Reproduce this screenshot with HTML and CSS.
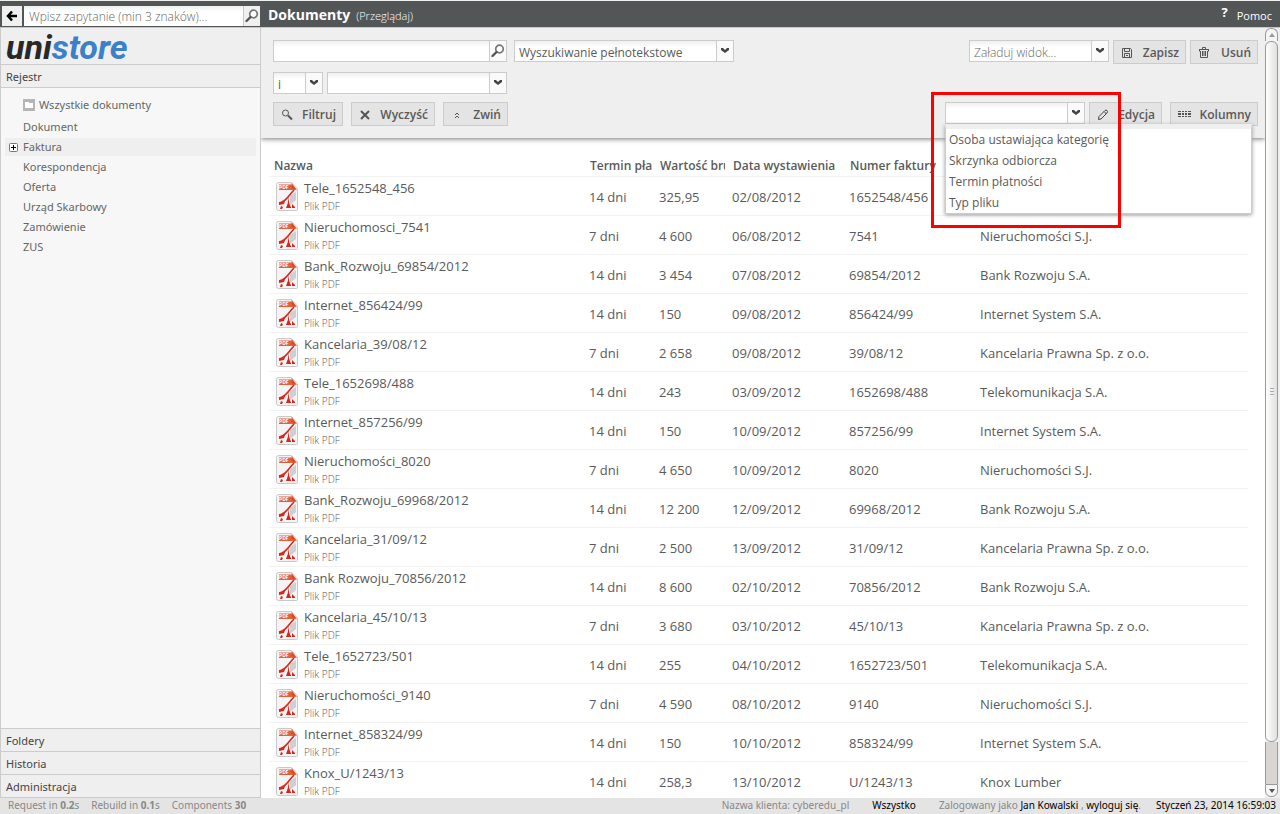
FILE: index.html
```html
<!DOCTYPE html>
<html lang="pl">
<head>
  <meta charset="UTF-8">
  <meta name="viewport" content="width=device-width, initial-scale=1">
  <title>unistore - Dokumenty</title>
  <link rel="stylesheet" href="styles.css">
</head>
<body>

<svg class="sprite" width="0" height="0">
  <symbol id="arrow" viewBox="0 0 10 6"><path d="M1 0h2l2 2 2-2h2v2L5 5 1 2z" fill="#444"/></symbol>
  <symbol id="lens" viewBox="0 0 14 14"><circle cx="8.5" cy="5" r="3.8" fill="#fff" stroke="#777" stroke-width="1.7"/><path d="M5.5 8L1.5 12" stroke="#555" stroke-width="2.4" stroke-linecap="round"/></symbol>
  <symbol id="pdf" viewBox="0 0 22 29">
    <path d="M2.5.5h13l6 6.500v20.500q0 1-1 1h-18q-2 0-2-2v-24q0-2 2-2z" fill="#f4f4f4" stroke="#c9c9c9"/>
    <path d="M14 14l6-4v8l-6 5z" fill="#cfcfd2"/>
    <path d="M3 2.500h12l5 5.500H3z" fill="#e2603a"/>
    <path d="M15.500 1l5.500 7-5.500-2z" fill="#d94a25"/>
    <path d="M3 21Q8 20 12 15T18 8" fill="none" stroke="#d8261c" stroke-width="1.600"/>
    <path d="M12.500 14q0 8 3 12h-5.500q2.500-5 2.500-12z" fill="#d8261c"/>
    <path d="M3 21l4-1 3-4-2 6-5 1zM5 24l2 1-1 2H4zM16 22l3 3v1h-3z" fill="#d8261c"/>
  </symbol>
</svg>

<header class="topbar">
  <form class="quick-search">
    <button type="button" class="back" aria-label="Wstecz">
      <svg width="12" height="12" viewBox="0 0 12 12"><path d="M6 1.500L2 6l4 4.500M2 6h9" fill="none" stroke="#000" stroke-width="2.500"/></svg>
    </button>
    <input type="text" aria-label="Szukaj" placeholder="Wpisz zapytanie (min 3 znaków)...">
    <button type="button" class="lens" aria-label="Szukaj"><svg width="14" height="14"><use href="#lens"/></svg></button>
  </form>
  <h1>Dokumenty</h1>
  <span class="mode">(Przeglądaj)</span>
  <a href="#" class="help"><b>?</b><span>Pomoc</span></a>
</header>

<div class="page">
  <aside class="sidebar">
    <div class="logo"><span>uni</span>store</div>
    <h2>Rejestr</h2>
    <ul class="tree">
      <li class="all">
        <svg width="12" height="12" viewBox="0 0 12 12"><path d="M0 0h12v12H0z" fill="#b5b5b5"/><path d="M2 3h4v1h4v5H2z" fill="#fff"/></svg>
        <a href="#">Wszystkie dokumenty</a>
      </li>
      <li><a href="#">Dokument</a></li>
      <li class="hover">
        <svg width="9" height="9" viewBox="0 0 9 9"><rect x=".5" y=".5" width="8" height="8" rx="1" fill="#fff" stroke="#777"/><path d="M2 4.500h5M4.500 2v5" stroke="#000"/></svg>
        <a href="#">Faktura</a>
      </li>
      <li><a href="#">Korespondencja</a></li>
      <li><a href="#">Oferta</a></li>
      <li><a href="#">Urząd Skarbowy</a></li>
      <li><a href="#">Zamówienie</a></li>
      <li><a href="#">ZUS</a></li>
    </ul>
    <h2>Foldery</h2>
    <h2>Historia</h2>
    <h2>Administracja</h2>
  </aside>

  <main class="content">
    <form class="toolbar">
      <div class="row">
        <div class="combo search">
          <input type="text" aria-label="Zapytanie">
          <button type="button" aria-label="Szukaj"><svg width="14" height="14"><use href="#lens"/></svg></button>
        </div>
        <div class="combo mode-select">
          <select aria-label="Rodzaj wyszukiwania"><option>Wyszukiwanie pełnotekstowe</option></select>
          <span class="drop"><svg width="10" height="6"><use href="#arrow"/></svg></span>
        </div>
        <div class="right">
          <div class="combo view">
            <select aria-label="Widok"><option>Załaduj widok...</option></select>
            <span class="drop"><svg width="10" height="6"><use href="#arrow"/></svg></span>
          </div>
          <button type="button" class="btn save">
            <svg width="12" height="12" viewBox="0 0 12 12" fill="none" stroke="#555"><path d="M1.500 1.500h8l1 1v8h-9zM3.500 1.500v3h5v-3M3.500 10.500v-4h5v4M5 8.500h2"/></svg>Zapisz
          </button>
          <button type="button" class="btn delete">
            <svg width="12" height="12" viewBox="0 0 12 12" fill="none" stroke="#555"><path d="M4.500 2V.500h3V2M1 2.500h10M1.500 3v1.500M10.500 3v1.500M2.500 4v6.500h7V4M4.500 4v5M6 4v5M7.500 4v5"/></svg>Usuń
          </button>
        </div>
      </div>
      <div class="row">
        <div class="combo operator">
          <select aria-label="Operator"><option>i</option></select>
          <span class="drop"><svg width="10" height="6"><use href="#arrow"/></svg></span>
        </div>
        <div class="combo field">
          <select aria-label="Pole"><option></option></select>
          <span class="drop"><svg width="10" height="6"><use href="#arrow"/></svg></span>
        </div>
      </div>
      <div class="row actions">
        <button type="button" class="btn filter">
          <svg width="12" height="12" viewBox="0 0 12 12" fill="none" stroke="#555"><circle cx="4.500" cy="4" r="3"/><path d="M7 6.500l4 4" stroke-width="2"/></svg>Filtruj
        </button>
        <button type="button" class="btn clear">
          <svg width="12" height="12" viewBox="0 0 12 12" fill="none" stroke="#555" stroke-width="2"><path d="M2 2l8 8M10 2l-8 8"/></svg>Wyczyść
        </button>
        <button type="button" class="btn collapse">
          <svg width="12" height="12" viewBox="0 0 12 12" fill="none" stroke="#555"><path d="M4 6l2-2 2 2M4 9l2-2 2 2"/></svg>Zwiń
        </button>
        <div class="right">
          <div class="combo category">
            <select aria-label="Kolumna"><option></option></select>
            <span class="drop"><svg width="10" height="6"><use href="#arrow"/></svg></span>
            <ul class="menu">
              <li>Osoba ustawiająca kategorię</li>
              <li>Skrzynka odbiorcza</li>
              <li>Termin płatności</li>
              <li>Typ pliku</li>
            </ul>
            <div class="marker"></div>
          </div>
          <button type="button" class="btn edit">
            <svg width="12" height="12" viewBox="0 0 12 12" fill="none" stroke="#444"><path d="M1.500 10.500l.5-3L8 1.500q1-1 2 0t0 2.500l-6 6zM7 2.500l2.500 2.500"/></svg>Edycja
          </button>
          <button type="button" class="btn columns">
            <svg width="13" height="12" viewBox="0 0 13 12" fill="#555"><path d="M0 2h3v1H0zM4 2h2v1H4zM7 2h2v1H7zM10 2h3v1h-3zM0 4h3v2H0zM4 4h2v2H4zM7 4h2v2H7zM10 4h3v2h-3zM0 7h3v1H0zM4 7h2v1H4zM7 7h2v1H7zM10 7h3v1h-3z"/></svg>Kolumny
          </button>
        </div>
      </div>
    </form>

    <table>
      <colgroup>
        <col class="c-name"><col class="c-term"><col class="c-value"><col class="c-date"><col class="c-number"><col>
      </colgroup>
      <thead>
        <tr>
          <th>Nazwa</th><th><div>Termin płatności</div></th><th><div>Wartość brutto</div></th><th>Data wystawienia</th><th>Numer faktury</th><th></th>
        </tr>
      </thead>
      <tbody id="documents"></tbody>
    </table>
  </main>

  <div class="scrollbar">
    <span class="step up"></span>
    <span class="thumb"></span>
    <span class="track"></span>
    <span class="step down"></span>
  </div>
</div>

<footer class="status">
  <span>Request in <b>0.2</b>s</span>
  <span>Rebuild in <b>0.1</b>s</span>
  <span>Components <b>30</b></span>
  <div class="session">
    <span class="client">Nazwa klienta: cyberedu_pl</span>
    <a href="#">Wszystko</a>
    <span class="user">Zalogowany jako <a href="#">Jan Kowalski</a> , <a href="#">wyloguj się</a>.</span>
    <time>Styczeń 23, 2014 16:59:03</time>
  </div>
</footer>

<script>
  const rows = [
    ['Tele_1652548_456', '14 dni', '325,95', '02/08/2012', '1652548/456', ''],
    ['Nieruchomosci_7541', '7 dni', '4 600', '06/08/2012', '7541', 'Nieruchomości S.J.'],
    ['Bank_Rozwoju_69854/2012', '14 dni', '3 454', '07/08/2012', '69854/2012', 'Bank Rozwoju S.A.'],
    ['Internet_856424/99', '14 dni', '150', '09/08/2012', '856424/99', 'Internet System S.A.'],
    ['Kancelaria_39/08/12', '7 dni', '2 658', '09/08/2012', '39/08/12', 'Kancelaria Prawna Sp. z o.o.'],
    ['Tele_1652698/488', '14 dni', '243', '03/09/2012', '1652698/488', 'Telekomunikacja S.A.'],
    ['Internet_857256/99', '14 dni', '150', '10/09/2012', '857256/99', 'Internet System S.A.'],
    ['Nieruchomości_8020', '7 dni', '4 650', '10/09/2012', '8020', 'Nieruchomości S.J.'],
    ['Bank_Rozwoju_69968/2012', '14 dni', '12 200', '12/09/2012', '69968/2012', 'Bank Rozwoju S.A.'],
    ['Kancelaria_31/09/12', '7 dni', '2 500', '13/09/2012', '31/09/12', 'Kancelaria Prawna Sp. z o.o.'],
    ['Bank Rozwoju_70856/2012', '14 dni', '8 600', '02/10/2012', '70856/2012', 'Bank Rozwoju S.A.'],
    ['Kancelaria_45/10/13', '7 dni', '3 680', '03/10/2012', '45/10/13', 'Kancelaria Prawna Sp. z o.o.'],
    ['Tele_1652723/501', '14 dni', '255', '04/10/2012', '1652723/501', 'Telekomunikacja S.A.'],
    ['Nieruchomości_9140', '7 dni', '4 590', '08/10/2012', '9140', 'Nieruchomości S.J.'],
    ['Internet_858324/99', '14 dni', '150', '10/10/2012', '858324/99', 'Internet System S.A.'],
    ['Knox_U/1243/13', '14 dni', '258,3', '13/10/2012', 'U/1243/13', 'Knox Lumber']
  ];

  document.getElementById('documents').innerHTML = rows.map(([name, ...cells]) => `
    <tr>
      <td><div class="doc">
        <svg width="22" height="29"><use href="#pdf"/><text x="3" y="7">PDF</text></svg>
        <div><a href="#">${name}</a><small>Plik PDF</small></div>
      </div></td>
      ${cells.map(c => `<td>${c}</td>`).join('')}
    </tr>`).join('');
</script>

</body>
</html>
```
FILE: styles.css
```css
* {
  box-sizing: border-box;
}

body {
  margin: 0;
  height: 100vh;
  display: flex;
  flex-direction: column;
  overflow: hidden;
  font: 13px/18px 'Open Sans', sans-serif;
  color: #5a5a5a;
  background: #fff;
}

a {
  color: inherit;
  text-decoration: none;
}

input,
select,
button {
  font: inherit;
  color: inherit;
  margin: 0;
  border-radius: 0;
}

ul {
  list-style: none;
  margin: 0;
  padding: 0;
}

.sprite {
  position: absolute;
}

/* Top bar */
.topbar {
  display: flex;
  align-items: center;
  flex: none;
  height: 28px;
  padding-right: 8px;
  border-top: 1px solid #f0f0f0;
  border-bottom: 1px solid #c8c8c8;
  background: #525657;
  color: #fff;
}

.quick-search {
  display: flex;
  width: 260px;
  height: 20px;
  margin-top: 4px;
  padding-left: 2px;
}

.quick-search button {
  display: flex;
  align-items: center;
  justify-content: center;
  padding: 0;
  border: 0;
  background: #f0f0f0;
}

.quick-search .back {
  width: 20px;
  margin-right: 2px;
}

.quick-search .lens {
  width: 17px;
  border-left: 1px solid #c8c8c8;
}

.quick-search input {
  flex: 1;
  min-width: 0;
  padding: 2px 5px 0;
  border: 0;
  font-size: 12px;
  font-weight: 300;
  background: linear-gradient(#eef0f0, #fff 6px);
}

.quick-search input::placeholder {
  color: #666;
}

.topbar h1 {
  margin: 2px 6px 0 8px;
  font-size: 14px;
}

.mode {
  margin-top: 4px;
  font-size: 11px;
  font-weight: 300;
}

.help {
  display: flex;
  gap: 9px;
  margin-left: auto;
}

.help span {
  margin-top: 4px;
  font-size: 11px;
}

.page {
  display: flex;
  flex: 1;
  min-height: 0;
}

/* Sidebar */
.sidebar {
  display: flex;
  flex-direction: column;
  flex: none;
  width: 261px;
  border: 1px solid #ccc;
  border-width: 0 1px 0 1px;
  background: #f7f7f7;
  font-family: 'Noto Sans', sans-serif;
  font-size: 11px;
}

.logo {
  height: 36px;
  padding-left: 5px;
  background: #efefef;
  color: #3c81c8;
  font: italic 700 34px/38px Roboto, sans-serif;
}

.logo span {
  color: #262829;
}

.sidebar h2 {
  flex: none;
  margin: 0;
  height: 23px;
  padding-left: 5px;
  border-top: 1px solid #ccc;
  background: #efefef;
  color: #444;
  font-size: 11px;
  font-weight: 400;
  line-height: 24px;
}

.sidebar h2:last-child {
  height: 24px;
  border-bottom: 1px solid #ccc;
}

.tree {
  flex: 1;
  padding: 6px 4px;
  border-top: 1px solid #ccc;
  color: #666;
}

.tree li {
  display: flex;
  align-items: center;
  height: 18px;
  margin-bottom: 2px;
  padding-left: 18px;
}

.tree .all {
  height: 22px;
  gap: 4px;
}

.tree .hover {
  gap: 5px;
  padding-left: 4px;
  background: #efefef;
}

/* Toolbar */
.content {
  flex: 1;
  min-width: 0;
  overflow: hidden;
}

.toolbar {
  position: relative;
  display: flex;
  flex-direction: column;
  gap: 8px;
  padding: 12px 7px 12px 12px;
  background: #efefef;
  box-shadow: 0 1px 5px #777;
}

.row {
  display: flex;
  align-items: flex-start;
  gap: 4px;
}

.row:first-child {
  gap: 7px;
}

.actions {
  gap: 8px;
}

.right {
  display: flex;
  gap: 4px;
  margin-left: auto;
}

.combo {
  position: relative;
  display: grid;
  grid-template-columns: 1fr 18px;
  height: 22px;
}

.combo select,
.combo input {
  grid-area: 1 / 1 / 2 / 3;
  width: 100%;
  height: 22px;
  padding: 3px 4px 0;
  border: 1px solid #ccc;
  background: linear-gradient(#eef0f0, #fff 6px);
  appearance: none;
  font-size: 12px;
}

.drop,
.combo button {
  grid-area: 1 / 2;
  display: flex;
  align-items: center;
  justify-content: center;
  height: 22px;
  padding: 0;
  border: 1px solid #ccc;
  background: #fafafa;
}

.drop {
  pointer-events: none;
}

.search {
  width: 234px;
}

.mode-select {
  width: 220px;
}

.view,
.category {
  width: 140px;
}

.combo.view select {
  color: #666;
  font-weight: 300;
}

.operator {
  width: 50px;
}

.field {
  width: 180px;
}

.btn {
  display: flex;
  align-items: center;
  justify-content: space-between;
  height: 24px;
  padding: 1px 6px 0 7px;
  border: 1px solid #ccc;
  background: #e4e4e4;
  font-size: 12px;
  font-weight: 600;
}

.save,
.edit {
  width: 73px;
}

.delete {
  width: 68px;
}

.filter {
  width: 70px;
}

.clear {
  width: 84px;
}

.collapse {
  width: 65px;
}

.columns {
  width: 88px;
  margin-left: 4px;
}

.menu {
  position: absolute;
  z-index: 2;
  top: 22px;
  left: 0;
  width: 307px;
  border: 1px solid #ccc;
  border-top: 5px solid #efefef;
  background: #fff;
  box-shadow: 0 1px 4px #999;
  font-size: 12px;
  line-height: 21px;
}

.menu li {
  padding-left: 3px;
}

.marker {
  position: absolute;
  z-index: 3;
  top: -10px;
  left: -14px;
  width: 190px;
  height: 136px;
  border: 3px solid #f00;
}

/* Documents table */
table {
  width: calc(100% - 25px);
  margin: 16px 0 0 8px;
  border-collapse: collapse;
  table-layout: fixed;
}

.c-name {
  width: 315px;
}

.c-term {
  width: 70px;
}

.c-value {
  width: 73px;
}

.c-date {
  width: 117px;
}

.c-number {
  width: 131px;
}

th,
td {
  padding: 2px 0 0 5px;
  border-bottom: 1px solid #f2f2f2;
  text-align: left;
  white-space: nowrap;
}

th {
  height: 22px;
  font-size: 12px;
  font-weight: 600;
}

th + th {
  padding-left: 6px;
}

th div {
  overflow: hidden;
  margin-right: 2px;
}

td {
  height: 39px;
}

.doc {
  display: flex;
  align-items: center;
  gap: 6px;
  padding-left: 2px;
}

.doc a,
.doc small {
  display: block;
}

.doc small {
  font-size: 10px;
  font-weight: 300;
}

.doc text {
  font-size: 5px;
  font-weight: 700;
  fill: #fff;
}

/* Scrollbar */
.scrollbar {
  display: flex;
  flex-direction: column;
  flex: none;
  width: 15px;
  padding: 0 2px 1px 0;
  background: #efefef;
}

.scrollbar span {
  border: 1px solid #999;
}

.step {
  height: 13px;
  background: #f5f5f5;
}

.step.up {
  border-bottom: 0;
  border-radius: 6px 6px 0 0;
}

.step.down {
  border-radius: 0 0 6px 6px;
}

.step::before {
  content: '';
  display: block;
  width: 0;
  margin: 4px auto;
  border: 3px solid transparent;
  border-top: 0;
  border-bottom: 4px solid #999;
}

.step.down::before {
  border-top: 4px solid #555;
  border-bottom: 0;
}

.thumb {
  display: flex;
  align-items: center;
  justify-content: center;
  flex: 1;
  border-radius: 6px;
  background: linear-gradient(90deg, #fff, #e2e0df);
}

.thumb::before {
  content: '';
  width: 4px;
  height: 7px;
  background: repeating-linear-gradient(#aaa 0 1px, transparent 1px 3px);
}

.scrollbar .track {
  height: 42px;
  border-width: 0 1px;
  background: #d8d5d3;
}

/* Status bar */
.status {
  display: flex;
  align-items: center;
  gap: 12px;
  flex: none;
  height: 16px;
  padding: 0 4px 2px 8px;
  background: #e4e4e4;
  color: #888;
  font: 10px/14px 'Noto Sans', sans-serif;
}

.session {
  display: flex;
  gap: 23px;
  margin-left: auto;
}

.session a,
.session time {
  color: #000;
}

.user {
  margin-right: -8px;
}
```
